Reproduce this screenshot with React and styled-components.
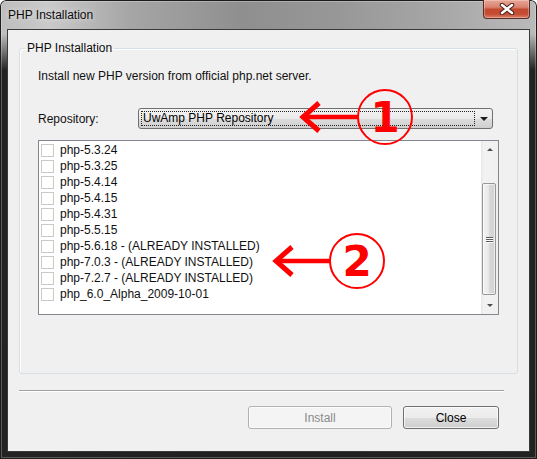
import React from 'react'
import styled, { createGlobalStyle } from 'styled-components'

const GlobalStyle = createGlobalStyle`
  html, body {
    margin: 0;
    padding: 0;
    background: #ffffff;
  }
  body {
    font-family: "Liberation Sans", Arial, sans-serif;
    font-size: 12px;
    color: #111;
  }
  #root {
    width: 537px;
    height: 459px;
  }
`

const versions = [
  'php-5.3.24',
  'php-5.3.25',
  'php-5.4.14',
  'php-5.4.15',
  'php-5.4.31',
  'php-5.5.15',
  'php-5.6.18 - (ALREADY INSTALLED)',
  'php-7.0.3 - (ALREADY INSTALLED)',
  'php-7.2.7 - (ALREADY INSTALLED)',
  'php_6.0_Alpha_2009-10-01'
]

const Window = styled.div`
  position: relative;
  width: 537px;
  height: 459px;
  box-sizing: border-box;
  display: flex;
  flex-direction: column;
  border-radius: 6px 6px 0 0;
  overflow: hidden;
  box-shadow: inset 0 0 0 1px #1c1c1c, inset 0 0 0 2px rgba(255, 255, 255, 0.25);
  background:
    linear-gradient(180deg, rgba(18, 18, 18, 0) 0px, rgba(18, 18, 18, 0) 34px, rgba(22, 22, 22, 0.92) 70px, rgba(26, 26, 26, 0.95) 100%),
    linear-gradient(90deg, #bdbdbd 0%, #cacaca 9%, #a6a6a6 24%, #8f8f8f 45%, #979797 62%, #a5a5a5 80%, #bababa 100%);
`

const TitleBar = styled.div`
  height: 29px;
  display: flex;
  align-items: flex-start;
  flex: none;
`

const Title = styled.div`
  padding: 8px 0 0 8px;
  line-height: 14px;
  font-size: 12px;
  color: #0c0c0c;
  text-shadow: 0 0 6px rgba(255, 255, 255, 0.8);
`

const CloseButton = styled.div`
  margin-left: auto;
  margin-right: 7px;
  width: 47px;
  height: 19px;
  box-sizing: border-box;
  display: flex;
  align-items: center;
  justify-content: center;
  border: 1px solid #5b2c23;
  border-top: none;
  border-radius: 0 0 4px 4px;
  box-shadow: inset 0 0 0 1px rgba(255, 225, 215, 0.35);
  background: linear-gradient(180deg, #e7a698 0%, #d98270 40%, #c34a31 52%, #c64b31 78%, #d98471 100%);
`

const Client = styled.div`
  flex: 1;
  display: flex;
  flex-direction: column;
  margin: 0 7px 7px 7px;
  border: 1px solid #3a3a3a;
  background: #f0f0f0;
`

const GroupBox = styled.fieldset`
  flex: none;
  margin: 11px 11px 0 11px;
  padding: 0;
  min-width: 0;
  border: 1px solid #d5dfe5;
  border-radius: 3px;
  box-shadow: inset 1px 1px 0 #fff;
`

const Legend = styled.legend`
  margin-left: 5px;
  padding: 0 2px;
  line-height: 14px;
  color: #0c0c0c;
`

const GroupBody = styled.div`
  padding: 14px 18px 58px 18px;
`

const Intro = styled.div`
  line-height: 14px;
`

const RepoRow = styled.div`
  margin-top: 25px;
  display: flex;
  align-items: center;
`

const Label = styled.div`
  width: 100px;
  line-height: 14px;
`

const Select = styled.div`
  width: 355px;
  height: 21px;
  box-sizing: border-box;
  display: flex;
  align-items: center;
  border: 1px solid #707070;
  border-radius: 3px;
  background: linear-gradient(180deg, #f2f2f2 0%, #ebebeb 50%, #dddddd 51%, #cfcfcf 100%);
`

const FocusRect = styled.div`
  flex: 1;
  height: 15px;
  margin-left: 2px;
  box-sizing: border-box;
  border: 1px dotted #222;
  padding-left: 1px;
  line-height: 13px;
  color: #000;
`

const DropArrow = styled.div`
  width: 17px;
  display: flex;
  justify-content: center;
  &::after {
    content: '';
    border-left: 4px solid transparent;
    border-right: 4px solid transparent;
    border-top: 4px solid #1a1a1a;
  }
`

const ListBox = styled.div`
  margin-top: 11px;
  height: 175px;
  box-sizing: border-box;
  display: flex;
  border: 1px solid #828790;
  background: #fff;
`

const Items = styled.div`
  flex: 1;
  padding: 1px 0 0 2px;
  overflow: hidden;
`

const Item = styled.div`
  height: 16px;
  display: flex;
  align-items: center;
  white-space: nowrap;
`

const Check = styled.span`
  width: 13px;
  height: 13px;
  box-sizing: border-box;
  border: 1px solid #c9c9c9;
  background: #fff;
  margin-right: 6px;
  flex: none;
`

const ScrollBar = styled.div`
  width: 17px;
  display: flex;
  flex-direction: column;
  background: linear-gradient(90deg, #e6e6e6 0%, #f2f2f2 15%, #f0f0f0 100%);
`

const ScrollArrow = styled.div`
  height: 17px;
  display: flex;
  align-items: center;
  justify-content: center;
  &::after {
    content: '';
    border-left: 3px solid transparent;
    border-right: 3px solid transparent;
    ${p => (p.$up ? 'border-bottom: 3px solid #4d4d4d;' : 'border-top: 3px solid #4d4d4d;')}
  }
`

const Track = styled.div`
  flex: 1;
  padding-top: 25px;
`

const Thumb = styled.div`
  width: 14px;
  height: 112px;
  margin-left: 1px;
  box-sizing: border-box;
  border: 1px solid #979797;
  border-radius: 2px;
  display: flex;
  flex-direction: column;
  align-items: center;
  justify-content: center;
  gap: 1px;
  background: linear-gradient(90deg, #f3f3f3 0%, #e9e9e9 45%, #d8d8d8 55%, #d2d2d2 100%);
  box-shadow: inset 0 0 0 1px rgba(255, 255, 255, 0.6);
`

const Grip = styled.span`
  width: 7px;
  height: 1px;
  background: #5a5a5a;
  box-shadow: 0 1px 0 #fff;
`

const Separator = styled.div`
  margin: 16px 25px 0 11px;
  border-top: 1px solid #a0a0a0;
  border-bottom: 1px solid #fff;
`

const ButtonRow = styled.div`
  margin: 14px 30px 0 0;
  display: flex;
  justify-content: flex-end;
  gap: 11px;
`

const Button = styled.div`
  width: ${p => p.$width}px;
  height: 23px;
  box-sizing: border-box;
  display: flex;
  align-items: center;
  justify-content: center;
  border-radius: 3px;
  border: 1px solid ${p => (p.$disabled ? '#adb2b5' : '#707070')};
  color: ${p => (p.$disabled ? '#8a8a8a' : '#000')};
  background: ${p =>
    p.$disabled
      ? '#f4f4f4'
      : 'linear-gradient(180deg, #f2f2f2 0%, #ebebeb 50%, #dddddd 51%, #cfcfcf 100%)'};
  box-shadow: inset 0 0 0 1px rgba(255, 255, 255, 0.7);
`

const Callout = styled.svg`
  position: absolute;
  left: ${p => p.$x}px;
  top: ${p => p.$y}px;
  overflow: visible;
`

const Marker = ({ x, y, num, reach }) => (
  <Callout $x={x} $y={y} width={120} height={62} viewBox="0 0 120 62">
    <line x1={5} y1={31} x2={reach - 27} y2={31} stroke="#f00" strokeWidth={4.5} />
    <polyline points="20,17 4,31 20,45" fill="none" stroke="#f00" strokeWidth={5} />
    <circle cx={reach} cy={31} r={27} fill="none" stroke="#f00" strokeWidth={2} />
    <text
      x={reach}
      y={46}
      textAnchor="middle"
      fill="#f00"
      fontFamily="'DejaVu Sans', sans-serif"
      fontWeight="bold"
      fontSize={42}
    >
      {num}
    </text>
  </Callout>
)

const CloseGlyph = () => (
  <svg width="16" height="12" viewBox="0 0 16 12">
    <path d="M3 2 L13 10 M13 2 L3 10" stroke="#4a2019" strokeWidth="4.5" strokeLinecap="round" />
    <path d="M3 2 L13 10 M13 2 L3 10" stroke="#fff" strokeWidth="2.5" strokeLinecap="round" />
  </svg>
)

export default function App() {
  return (
    <>
      <GlobalStyle />
      <Window>
        <TitleBar>
          <Title>PHP Installation</Title>
          <CloseButton>
            <CloseGlyph />
          </CloseButton>
        </TitleBar>
        <Client>
          <GroupBox>
            <Legend>PHP Installation</Legend>
            <GroupBody>
              <Intro>Install new PHP version from official php.net server.</Intro>
              <RepoRow>
                <Label>Repository:</Label>
                <Select>
                  <FocusRect>UwAmp PHP Repository</FocusRect>
                  <DropArrow />
                </Select>
              </RepoRow>
              <ListBox>
                <Items>
                  {versions.map(v => (
                    <Item key={v}>
                      <Check />
                      {v}
                    </Item>
                  ))}
                </Items>
                <ScrollBar>
                  <ScrollArrow $up />
                  <Track>
                    <Thumb>
                      <Grip />
                      <Grip />
                      <Grip />
                    </Thumb>
                  </Track>
                  <ScrollArrow />
                </ScrollBar>
              </ListBox>
            </GroupBody>
          </GroupBox>
          <Separator />
          <ButtonRow>
            <Button $width={144} $disabled>Install</Button>
            <Button $width={96}>Close</Button>
          </ButtonRow>
        </Client>
        <Marker x={299} y={86} num="1" reach={86} />
        <Marker x={272} y={230} num="2" reach={85} />
      </Window>
    </>
  )
}
